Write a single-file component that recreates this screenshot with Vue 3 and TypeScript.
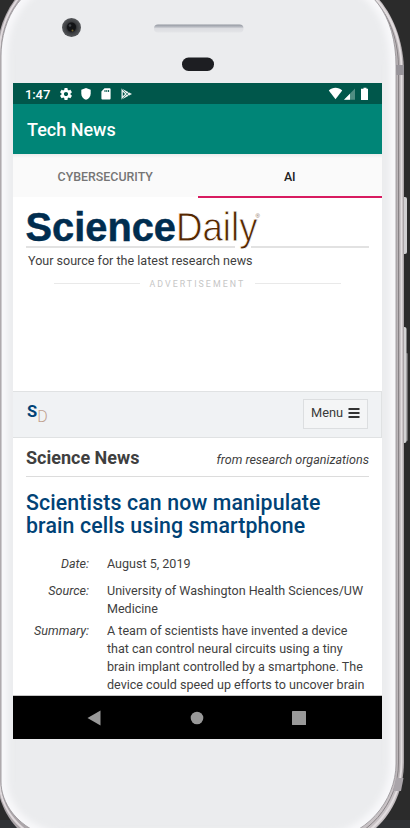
<script setup lang="ts">
import { ref } from 'vue'

interface Detail {
  label: string
  lines: string[]
}

const tabs: string[] = ['CYBERSECURITY', 'AI']
const activeTab = ref<number>(1)

const headline: string[] = ['Scientists can now manipulate', 'brain cells using smartphone']

const details: Detail[] = [
  { label: 'Date:', lines: ['August 5, 2019'] },
  { label: 'Source:', lines: ['University of Washington Health Sciences/UW', 'Medicine'] },
  {
    label: 'Summary:',
    lines: [
      'A team of scientists have invented a device',
      'that can control neural circuits using a tiny',
      'brain implant controlled by a smartphone. The',
      'device could speed up efforts to uncover brain',
    ],
  },
]
</script>

<template>
  <div class="stage">
    <svg class="device" width="410" height="828" viewBox="0 0 410 828" aria-hidden="true">
      <defs>
        <linearGradient id="rim" x1="0" x2="1" y1="0" y2="0">
          <stop offset="0" stop-color="#a9a3a7" />
          <stop offset="0.97" stop-color="#c9c3c6" />
          <stop offset="1" stop-color="#aaa4a7" />
        </linearGradient>
        <radialGradient id="lens">
          <stop offset="0" stop-color="#17171a" />
          <stop offset="0.45" stop-color="#25262a" />
          <stop offset="0.6" stop-color="#3b3d40" />
          <stop offset="1" stop-color="#56585b" />
        </radialGradient>
        <linearGradient id="grille" x1="0" x2="0" y1="0" y2="1">
          <stop offset="0" stop-color="#92969f" />
          <stop offset="0.3" stop-color="#b9bcc3" />
          <stop offset="0.5" stop-color="#dcdde1" />
          <stop offset="1" stop-color="#e4e5e8" />
        </linearGradient>
        <filter id="soft" x="-10%" y="-10%" width="120%" height="120%">
          <feGaussianBlur stdDeviation="3" />
        </filter>
        <clipPath id="face">
          <path d="M70-22H326C372-20 396 16 396 66V764C396 800 366 840 320 840H60C14 830 1 800 1 782V56C1 20 22-22 70-22Z" />
        </clipPath>
      </defs>
      <rect width="410" height="828" fill="#2b2b2b" />
      <rect y="820" width="410" height="8" fill="#303236" />
      <rect x="402" y="197" width="5" height="57" rx="2" fill="#d0cfd1" />
      <rect x="402" y="327" width="4.500" height="116" rx="2" fill="#d2d2d3" />
      <rect x="406" y="353" width="1.500" height="88" rx=".7" fill="#a5a4a6" />
      <path d="M64-26H334C378-20 404 26 404 72V762C404 806 374 846 324 850H66C16 846-3 806-3 778V54C-3 16 22-26 64-26Z" fill="url(#rim)" />
      <path d="M330-24C376-18 401.500 24 401.500 70V762C401.500 804 372 844 324 848" fill="none" stroke="#e2dddf" stroke-width="2" />
      <path d="M328-22C374-17 398.500 22 398.500 68V763C398.500 802 369 842 322 844" fill="none" stroke="#888386" stroke-width="1" />
      <path d="M65-25C22-24-.5 18-.5 54V780C-.5 804 15 838 66 846" fill="none" stroke="#dfd9dc" stroke-width="2" />
      <path d="M396 65H404V75H396.500Z" fill="#98949a" />
      <path d="M396 778H403.500L401 791H393Z" fill="#aaa5aa" />
      <g clip-path="url(#face)">
        <rect x="-5" y="-25" width="405" height="875" fill="#ebecee" />
        <path d="M70-22H326C372-20 396 16 396 66V764C396 800 366 840 320 840H60C14 830 1 800 1 782V56C1 20 22-22 70-22Z" fill="none" stroke="#f8f8fa" stroke-width="13" filter="url(#soft)" />
      </g>
      <path d="M70-22H326C372-20 396 16 396 66V764C396 800 366 840 320 840H60C14 830 1 800 1 782V56C1 20 22-22 70-22Z" fill="none" stroke="#8f8b8f" stroke-width=".8" />
      <circle cx="71.500" cy="27.500" r="9.500" fill="url(#lens)" />
      <circle cx="71.500" cy="27" r="4.500" fill="#121316" />
      <circle cx="70" cy="25.500" r="1.300" fill="#42454a" />
      <circle cx="72.500" cy="30.500" r="1" fill="#76652c" />
      <rect x="154" y="24.500" width="89.500" height="8" rx="4" fill="url(#grille)" />
      <rect x="182" y="57.500" width="32" height="13.500" rx="6.500" fill="#1d1e22" />
    </svg>

    <main class="screen">
      <header class="status">
        <span class="clock">1:47</span>
        <svg class="sys gear" width="12" height="12" viewBox="2 2 20 20">
          <path fill="#fff" fill-rule="evenodd" d="M19.430 12.980c.04-.32.07-.64.07-.98s-.03-.66-.07-.98l2.110-1.650c.19-.15.24-.42.12-.64l-2-3.460c-.12-.22-.39-.3-.61-.22l-2.490 1c-.52-.4-1.080-.73-1.690-.98l-.38-2.650A.488.488 0 0 0 14 2h-4c-.25 0-.46.18-.49.42l-.38 2.650c-.61.25-1.170.59-1.690.98l-2.490-1c-.23-.09-.49 0-.61.22l-2 3.460c-.13.22-.07.49.12.64l2.110 1.650c-.04.32-.07.65-.07.98s.03.66.07.98l-2.110 1.650c-.19.15-.24.42-.12.64l2 3.460c.12.22.39.3.61.22l2.490-1c.52.4 1.080.73 1.690.98l.38 2.650c.03.24.24.42.49.42h4c.25 0 .46-.18.49-.42l.38-2.650c.61-.25 1.170-.59 1.690-.98l2.490 1c.23.09.49 0 .61-.22l2-3.460c.12-.22.07-.49-.12-.64l-2.110-1.650zM12 15.500c-1.930 0-3.500-1.570-3.500-3.500s1.570-3.500 3.500-3.500 3.500 1.570 3.500 3.500-1.570 3.500-3.500 3.500z" />
        </svg>
        <svg class="sys" width="10" height="12" viewBox="0 0 10 12">
          <path fill="#fff" d="M5 0 9.700 1.800V5.500C9.700 8.500 7.700 11 5 11.800 2.300 11 .3 8.500.3 5.500V1.800Z" />
        </svg>
        <svg class="sys" width="10" height="12" viewBox="0 0 10 12">
          <path fill="#fff" fill-rule="evenodd" d="M3.500.3H8.600A1 1 0 0 1 9.600 1.300V10.600A1 1 0 0 1 8.600 11.600H1.400A1 1 0 0 1 .4 10.600V3.500ZM3.500 2V4H4.500V2ZM5.300 2V4H6.300V2ZM7.100 2V4H8.100V2Z" />
        </svg>
        <svg class="sys" width="12" height="12" viewBox="0 0 12 12">
          <path fill="#e9f1ef" d="M.5.500 11 6 .5 11.500Z" />
          <path fill="none" stroke="#3b8073" stroke-width=".8" d="M1 1 8 8M1 11 8 4" />
          <path fill="#00574b" d="M1.800 3.800 4 6 1.800 8.200Z" />
        </svg>
        <span class="grow"></span>
        <svg class="signals" width="42" height="14" viewBox="0 0 42 14">
          <path fill="#fff" d="M7.500 12.300.8 3.600C4.500-.1 10.500-.1 14.200 3.600Z" />
          <path fill="#4e8d82" d="M27 1.500V12.800H16Z" />
          <path fill="#fff" d="M22 6.700V12.800H16Z" />
          <path fill="#fff" d="M34 1.800H35.500V.7H38.500V1.800H40V13H33V1.800Z" />
        </svg>
      </header>

      <div class="appbar">Tech News</div>

      <nav class="tabs">
        <button
          v-for="(tab, i) in tabs"
          :key="tab"
          class="tab"
          :class="{ active: i === activeTab }"
          @click="activeTab = i"
        >{{ tab }}</button>
      </nav>

      <section class="page">
        <div class="brand">
          <svg width="343" height="54" viewBox="0 0 343 54">
            <path d="M0 50H209M225 50H343" stroke="#d9d9d9" stroke-width="1.600" />
            <text class="science" x="-.5" y="43.500" textLength="150.500" lengthAdjust="spacingAndGlyphs">Science</text>
            <text class="daily" x="150" y="43.500" textLength="81.500" lengthAdjust="spacingAndGlyphs">Daily</text>
            <text class="reg" x="229.500" y="20.500">®</text>
          </svg>
        </div>
        <p class="tagline">Your source for the latest research news</p>
        <div class="advert"><i></i><span>ADVERTISEMENT</span><i></i></div>

        <div class="sitebar">
          <div class="mini"><b>S</b><span>D</span></div>
          <button class="menu">
            <span>Menu</span>
            <svg width="12" height="10" viewBox="0 0 12 10">
              <path d="M.5 1H11.500M.5 5H11.500M.5 9H11.500" stroke="#333" stroke-width="1.800" />
            </svg>
          </button>
        </div>

        <article class="article">
          <div class="section">
            <strong>Science News</strong>
            <em>from research organizations</em>
          </div>
          <h1><span v-for="line in headline" :key="line">{{ line }}</span></h1>
          <dl>
            <div v-for="d in details" :key="d.label" class="row">
              <dt>{{ d.label }}</dt>
              <dd><span v-for="line in d.lines" :key="line">{{ line }}</span></dd>
            </div>
          </dl>
        </article>
      </section>

      <footer class="keys">
        <svg width="14" height="16" viewBox="0 0 14 16"><path fill="#999" d="M13.500.5V15.500L.5 8Z" /></svg>
        <svg width="14" height="14" viewBox="0 0 14 14"><circle cx="7" cy="7" r="6.300" fill="#999" /></svg>
        <svg width="14" height="14" viewBox="0 0 14 14"><rect width="14" height="14" rx=".5" fill="#999" /></svg>
      </footer>
    </main>
  </div>
</template>

<style>
body {
  margin: 0;
  overflow: hidden;
  background: #2b2b2b;
}
</style>

<style scoped>
.stage {
  position: relative;
  box-sizing: border-box;
  width: 410px;
  height: 828px;
  padding: 83px 0 0 13px;
  overflow: hidden;
  font-family: Roboto, "Liberation Sans", sans-serif;
  color: #3f3f3f;
}
.stage * { box-sizing: border-box; }
.device { position: absolute; inset: 0; }
.screen {
  position: relative;
  display: flex;
  flex-direction: column;
  width: 369px;
  height: 656px;
  overflow: hidden;
  background: #fff;
}
.status {
  display: flex;
  align-items: center;
  height: 21px;
  flex: none;
  padding: 0 12px 0 12px;
  background: #00574b;
}
.clock { width: 35px; color: #fff; font-size: 13px; font-weight: 500; line-height: 21px; padding-top: 1px; letter-spacing: -.1px; }
.sys { margin-right: 10px; }
.gear { margin-right: 9px; }
.grow { flex: 1; }
.appbar {
  flex: none;
  height: 50px;
  padding: 1px 14px 0;
  line-height: 50px;
  background: #008577;
  color: #fff;
  font-size: 18px;
  font-weight: 500;
}
.tabs {
  display: flex;
  flex: none;
  height: 43px;
  background: linear-gradient(#ececec, #fafafa 4px);
}
.tab {
  flex: 1;
  height: 43.500px;
  padding: 4px 0 0;
  border: 0;
  border-bottom: 2px solid transparent;
  background: none;
  font: 500 12.400px Roboto, sans-serif;
  color: #757575;
}
.tab.active { color: #212121; border-bottom-color: #d81b60; }
.page { flex: 1; min-height: 0; overflow: hidden; border-bottom: 1px solid #c5c5c5; }
.brand { height: 55px; padding-left: 13px; }
.brand svg { display: block; overflow: visible; }
.science { font: bold 41px "Liberation Sans", Arial, sans-serif; fill: #002d4f; stroke: #002d4f; stroke-width: .5px; }
.daily { font: 400 41px "Liberation Sans", Arial, sans-serif; fill: #552700; stroke: #fff; stroke-width: .8px; }
.reg { font: 6px "Liberation Sans", sans-serif; fill: #8b6d55; }
.tagline { margin: 0; padding-left: 15px; font-size: 12.550px; line-height: 18px; white-space: nowrap; }
.advert {
  display: flex;
  align-items: center;
  justify-content: center;
  height: 27px;
  color: #c6c6c6;
  font-size: 8.800px;
  letter-spacing: 2.050px;
}
.advert span { width: 115px; padding-left: 9.500px; white-space: nowrap; }
.advert i { width: 86px; height: 1px; background: #e9e9e9; }
.sitebar {
  display: flex;
  justify-content: space-between;
  height: 47px;
  margin-top: 94px;
  padding: 7px 13px 0 14px;
  border: 1px solid #e0e2e3;
  border-left: 0;
  background: #f0f2f4;
}
.mini { display: flex; height: 32px; line-height: 26px; }
.mini b { color: #004276; font-size: 16.500px; line-height: 25px; }
.mini span { color: #c0a190; font-size: 16px; font-weight: 300; line-height: 36px; }
.menu {
  display: flex;
  align-items: center;
  gap: 5px;
  width: 65px;
  height: 30px;
  padding: 0 7px 3px;
  border: 1px solid #dcdee0;
  background: #f4f5f6;
  color: #3a3a3a;
  font: 12.800px Roboto, sans-serif;
  white-space: nowrap;
}
.menu svg { flex: none; }
.article { padding: 0 13px; }
.section {
  display: flex;
  align-items: center;
  justify-content: space-between;
  height: 39px;
  border-bottom: 1px solid #dcdcdc;
}
.section strong { padding-top: 1px; font-size: 18px; }
.section em { padding-top: 4px; font-size: 12.550px; }
h1 {
  margin: 14px 0 0;
  color: #004276;
  font-size: 21.300px;
  font-weight: 500;
  line-height: 23px;
  letter-spacing: .13px;
}
h1 span, dd span { display: block; white-space: nowrap; }
dl { margin: 18px 0 0; font-size: 12.550px; line-height: 18px; }
.row { display: flex; gap: 18px; margin-bottom: 4.500px; }
.row:first-child { margin-bottom: 8.500px; }
dt { width: 63px; text-align: right; font-style: italic; }
dd { margin: 0; }
.keys {
  display: flex;
  flex: none;
  align-items: center;
  justify-content: space-between;
  height: 43px;
  padding: 0 76px 0 74px;
  background: #000;
}
</style>
